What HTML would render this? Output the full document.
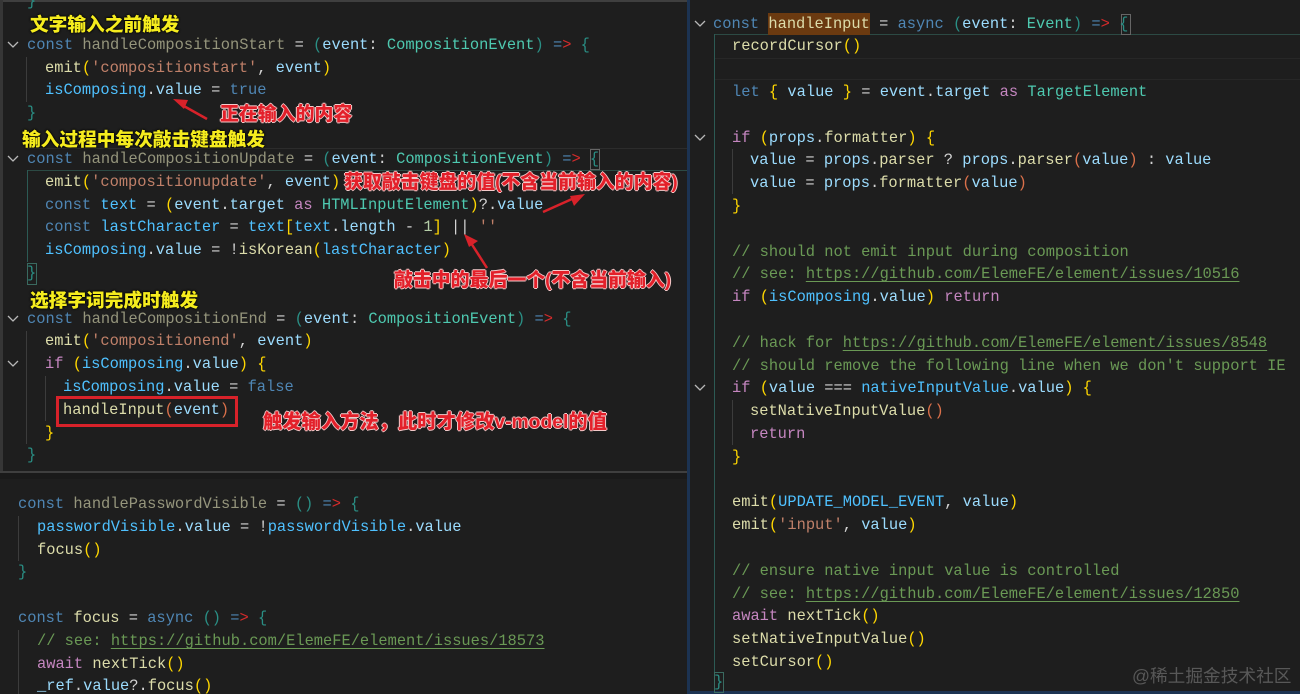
<!DOCTYPE html>
<html lang="zh"><head><meta charset="utf-8"><title>handleInput</title>
<style>
html,body{margin:0;padding:0;background:#1e1e1e}
#r{position:relative;width:1300px;height:694px;overflow:hidden;background:#1e1e1e}
.l{position:absolute;white-space:pre;font:15.39px/23px "Liberation Mono",monospace;color:#d4d4d4;height:23px}
.k{color:#4f86b4}.d{color:#95957c}.f{color:#dcdcaa}.v{color:#9cdcfe}.c{color:#4fc1ff}.s{color:#c08069}.t{color:#4ec9b0}
.m{color:#6a9955}.u{color:#6a9955;text-decoration:underline;text-underline-offset:3px}.p{color:#c586c0}.y{color:#ffd700}.o{color:#da704a}.b{color:#2a8f85}.r{color:#d52b2b}.g{color:#b5cea8}.e{color:#4f86b4}
.n{position:absolute;white-space:pre;font:900 18.7px/24px "Liberation Sans","Noto Sans CJK SC",sans-serif}
.ye{color:#f5ec1e;text-shadow:0 0 2px #000,0 0 2px #000}
.re{color:#e3202a;text-shadow:1px 0 0 #f3c9c9,-1px 0 0 #f3c9c9,0 1px 0 #f3c9c9,0 -1px 0 #f3c9c9}
.x{position:absolute}
</style></head><body><div id="r">
<div class="x" style="left:0;top:0;width:688px;height:472px;background:#1e1e1e"></div>
<div class="x" style="left:0;top:0;width:688px;height:2px;background:#3f3f3f"></div>
<div class="x" style="left:0;top:0;width:3px;height:472px;background:#363636"></div>
<div class="x" style="left:0;top:471px;width:688px;height:2px;background:#3f3f3f"></div>
<div class="x" style="left:0;top:473px;width:688px;height:6px;background:#1a1a1a"></div>
<div class="x" style="left:687px;top:0;width:3px;height:694px;background:#1c3352"></div>
<div class="x" style="left:690px;top:691px;width:610px;height:3px;background:#1c3352"></div>
<div class="x" style="left:27px;top:148px;width:660px;height:1px;background:#2c2c2c"></div>
<div class="x" style="left:27px;top:170px;width:660px;height:1px;background:#2c4a44"></div>
<div class="x" style="left:714px;top:34px;width:586px;height:1px;background:#2c4a44"></div>
<div class="x" style="left:714px;top:34px;width:1px;height:648px;background:#2c5a54"></div>
<div class="x" style="left:715px;top:58px;width:585px;height:22px;border-top:1px solid #272727;border-bottom:1px solid #272727;box-sizing:border-box"></div>
<div class="x" style="left:27px;top:170px;width:1px;height:92px;background:#2c5a54"></div>
<div class="x" style="left:26px;top:57px;width:1px;height:45px;background:#3c3c3c"></div>
<div class="x" style="left:26px;top:331px;width:1px;height:113px;background:#3c3c3c"></div>
<div class="x" style="left:45px;top:376px;width:1px;height:45px;background:#3c3c3c"></div>
<div class="x" style="left:18px;top:516px;width:1px;height:45px;background:#3c3c3c"></div>
<div class="x" style="left:18px;top:630px;width:1px;height:64px;background:#3c3c3c"></div>
<div class="x" style="left:732px;top:149px;width:1px;height:45px;background:#3c3c3c"></div>
<div class="x" style="left:732px;top:400px;width:1px;height:45px;background:#3c3c3c"></div>
<div class="x" style="left:768px;top:13px;width:102px;height:22px;background:#6b3a10"></div>
<div class="x" style="left:1121px;top:14px;width:8px;height:19px;border:1px solid #666;"></div>
<div class="x" style="left:590px;top:149px;width:8px;height:19px;border:1px solid #666"></div>
<div class="x" style="left:27px;top:263px;width:8px;height:20px;border:1px solid #3a6a60"></div>
<div class="x" style="left:714px;top:672px;width:8px;height:19px;border:1px solid #3a6a60"></div>

<div class="l b" style="left:27px;top:-10px">}</div>
<div class="l" style="left:27px;top:34px"><span class="k">const</span> <span class="d">handleCompositionStart</span> = <span class="b">(</span><span class="v">event</span>: <span class="t">CompositionEvent</span><span class="b">)</span> <span class="e">=</span><span class="r">&gt;</span> <span class="b">{</span></div>
<div class="l" style="left:45px;top:57px"><span class="f">emit</span><span class="y">(</span><span class="s">'compositionstart'</span>, <span class="v">event</span><span class="y">)</span></div>
<div class="l" style="left:45px;top:79px"><span class="c">isComposing</span>.<span class="v">value</span> = <span class="k">true</span></div>
<div class="l b" style="left:27px;top:102px">}</div>

<div class="l" style="left:27px;top:148px"><span class="k">const</span> <span class="d">handleCompositionUpdate</span> = <span class="b">(</span><span class="v">event</span>: <span class="t">CompositionEvent</span><span class="b">)</span> <span class="e">=</span><span class="r">&gt;</span> <span class="b">{</span></div>
<div class="l" style="left:45px;top:171px"><span class="f">emit</span><span class="y">(</span><span class="s">'compositionupdate'</span>, <span class="v">event</span><span class="y">)</span></div>
<div class="l" style="left:45px;top:194px"><span class="k">const</span> <span class="c">text</span> = <span class="y">(</span><span class="v">event</span>.<span class="v">target</span> <span class="p">as</span> <span class="t">HTMLInputElement</span><span class="y">)</span>?.<span class="v">value</span></div>
<div class="l" style="left:45px;top:216px"><span class="k">const</span> <span class="c">lastCharacter</span> = <span class="c">text</span><span class="y">[</span><span class="c">text</span>.<span class="v">length</span> - <span class="g">1</span><span class="y">]</span> || <span class="s">''</span></div>
<div class="l" style="left:45px;top:239px"><span class="c">isComposing</span>.<span class="v">value</span> = !<span class="f">isKorean</span><span class="y">(</span><span class="c">lastCharacter</span><span class="y">)</span></div>
<div class="l b" style="left:27px;top:262px">}</div>

<div class="l" style="left:27px;top:308px"><span class="k">const</span> <span class="d">handleCompositionEnd</span> = <span class="b">(</span><span class="v">event</span>: <span class="t">CompositionEvent</span><span class="b">)</span> <span class="e">=</span><span class="r">&gt;</span> <span class="b">{</span></div>
<div class="l" style="left:45px;top:330px"><span class="f">emit</span><span class="y">(</span><span class="s">'compositionend'</span>, <span class="v">event</span><span class="y">)</span></div>
<div class="l" style="left:45px;top:353px"><span class="p">if</span> <span class="y">(</span><span class="c">isComposing</span>.<span class="v">value</span><span class="y">)</span> <span class="y">{</span></div>
<div class="l" style="left:63px;top:376px"><span class="c">isComposing</span>.<span class="v">value</span> = <span class="k">false</span></div>
<div class="l" style="left:63px;top:399px"><span class="f">handleInput</span><span class="o">(</span><span class="v">event</span><span class="o">)</span></div>
<div class="l y" style="left:45px;top:422px">}</div>
<div class="l b" style="left:27px;top:444px">}</div>

<div class="l" style="left:18px;top:493px"><span class="k">const</span> <span class="d">handlePasswordVisible</span> = <span class="b">()</span> <span class="e">=</span><span class="r">&gt;</span> <span class="b">{</span></div>
<div class="l" style="left:37px;top:516px"><span class="c">passwordVisible</span>.<span class="v">value</span> = !<span class="c">passwordVisible</span>.<span class="v">value</span></div>
<div class="l" style="left:37px;top:539px"><span class="f">focus</span><span class="y">()</span></div>
<div class="l b" style="left:18px;top:561px">}</div>
<div class="l" style="left:18px;top:607px"><span class="k">const</span> <span class="f">focus</span> = <span class="k">async</span> <span class="b">()</span> <span class="e">=</span><span class="r">&gt;</span> <span class="b">{</span></div>
<div class="l" style="left:37px;top:630px"><span class="m">// see: </span><span class="u">https://github.com/ElemeFE/element/issues/18573</span></div>
<div class="l" style="left:37px;top:653px"><span class="p">await</span> <span class="f">nextTick</span><span class="y">()</span></div>
<div class="l" style="left:37px;top:675px"><span class="v">_ref</span>.<span class="v">value</span>?.<span class="f">focus</span><span class="y">()</span></div>

<div class="l" style="left:713px;top:13px"><span class="k">const</span> <span class="f">handleInput</span> = <span class="k">async</span> <span class="b">(</span><span class="v">event</span>: <span class="t">Event</span><span class="b">)</span> <span class="e">=</span><span class="r">&gt;</span> <span class="b">{</span></div>
<div class="l" style="left:732px;top:35px"><span class="f">recordCursor</span><span class="y">()</span></div>
<div class="l" style="left:732px;top:81px"><span class="k">let</span> <span class="y">{</span> <span class="v">value</span> <span class="y">}</span> = <span class="v">event</span>.<span class="v">target</span> <span class="p">as</span> <span class="t">TargetElement</span></div>
<div class="l" style="left:732px;top:127px"><span class="p">if</span> <span class="y">(</span><span class="v">props</span>.<span class="f">formatter</span><span class="y">)</span> <span class="y">{</span></div>
<div class="l" style="left:750px;top:149px"><span class="v">value</span> = <span class="v">props</span>.<span class="f">parser</span> ? <span class="v">props</span>.<span class="f">parser</span><span class="o">(</span><span class="v">value</span><span class="o">)</span> : <span class="v">value</span></div>
<div class="l" style="left:750px;top:172px"><span class="v">value</span> = <span class="v">props</span>.<span class="f">formatter</span><span class="o">(</span><span class="v">value</span><span class="o">)</span></div>
<div class="l y" style="left:732px;top:195px">}</div>
<div class="l m" style="left:732px;top:241px">// should not emit input during composition</div>
<div class="l" style="left:732px;top:263px"><span class="m">// see: </span><span class="u">https://github.com/ElemeFE/element/issues/10516</span></div>
<div class="l" style="left:732px;top:286px"><span class="p">if</span> <span class="y">(</span><span class="c">isComposing</span>.<span class="v">value</span><span class="y">)</span> <span class="p">return</span></div>
<div class="l" style="left:732px;top:332px"><span class="m">// hack for </span><span class="u">https://github.com/ElemeFE/element/issues/8548</span></div>
<div class="l m" style="left:732px;top:355px">// should remove the following line when we don't support IE</div>
<div class="l" style="left:732px;top:377px"><span class="p">if</span> <span class="y">(</span><span class="v">value</span> === <span class="c">nativeInputValue</span>.<span class="v">value</span><span class="y">)</span> <span class="y">{</span></div>
<div class="l" style="left:750px;top:400px"><span class="f">setNativeInputValue</span><span class="o">()</span></div>
<div class="l p" style="left:750px;top:423px">return</div>
<div class="l y" style="left:732px;top:446px">}</div>
<div class="l" style="left:732px;top:491px"><span class="f">emit</span><span class="y">(</span><span class="c">UPDATE_MODEL_EVENT</span>, <span class="v">value</span><span class="y">)</span></div>
<div class="l" style="left:732px;top:514px"><span class="f">emit</span><span class="y">(</span><span class="s">'input'</span>, <span class="v">value</span><span class="y">)</span></div>
<div class="l m" style="left:732px;top:560px">// ensure native input value is controlled</div>
<div class="l" style="left:732px;top:583px"><span class="m">// see: </span><span class="u">https://github.com/ElemeFE/element/issues/12850</span></div>
<div class="l" style="left:732px;top:605px"><span class="p">await</span> <span class="f">nextTick</span><span class="y">()</span></div>
<div class="l" style="left:732px;top:628px"><span class="f">setNativeInputValue</span><span class="y">()</span></div>
<div class="l" style="left:732px;top:651px"><span class="f">setCursor</span><span class="y">()</span></div>
<div class="l b" style="left:714px;top:671px">}</div>

<svg class="x" style="left:0;top:0" width="1300" height="694" fill="none">
<g stroke="#b8b8b8" stroke-width="1.3">
<path d="M8 42l5 5 5-5M8 156l5 5 5-5M8 316l5 5 5-5M8 361l5 5 5-5M695 21l5 5 5-5M695 135l5 5 5-5M695 385l5 5 5-5"/>
</g>
<rect x="57.500" y="397.500" width="179" height="28" stroke="#d8222a" stroke-width="3"/>
<g stroke="#d8222a" stroke-width="2.500" fill="#d8222a">
<path d="M207 119L182 105"/><path d="M173 99l15 1-4 9z" stroke="none"/>
<path d="M543 212L572 199"/><path d="M585 194l-11 12-4-10z" stroke="none"/>
<path d="M487 268L471 243"/><path d="M464 234l14 7-9 6z" stroke="none"/>
</g>
</svg>

<div class="n ye" style="left:30px;top:13px">文字输入之前触发</div>
<div class="n ye" style="left:22px;top:128px">输入过程中每次敲击键盘触发</div>
<div class="n ye" style="left:30px;top:289px">选择字词完成时触发</div>
<div class="n re" style="left:220px;top:103px;font-size:18.900px">正在输入的内容</div>
<div class="n re" style="left:344px;top:171px;font-size:18.900px">获取敲击键盘的值(不含当前输入的内容)</div>
<div class="n re" style="left:394px;top:269px;font-size:18.900px">敲击中的最后一个(不含当前输入)</div>
<div class="n re" style="left:263px;top:411px;font-size:19.300px">触发输入方法，此时才修改v-model的值</div>
<div class="x" style="left:1132px;top:664px;font:17.700px/24px 'Liberation Sans','Noto Sans CJK SC',sans-serif;color:#585858;white-space:pre">@稀土掘金技术社区</div>
</div></body></html>
